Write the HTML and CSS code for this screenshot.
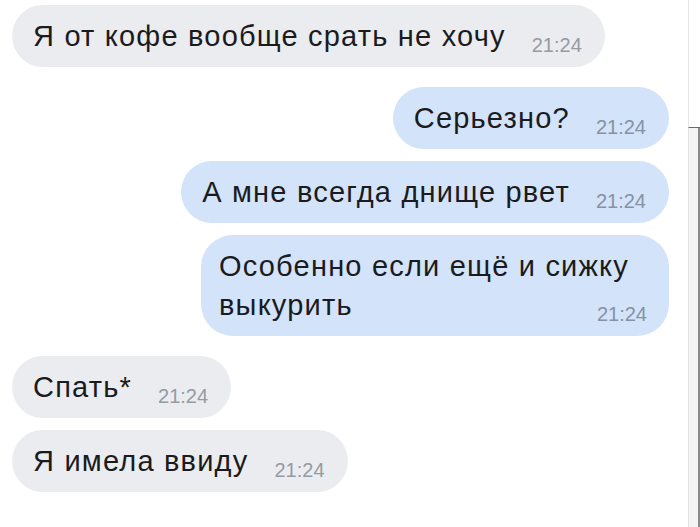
FILE: index.html
```html
<!DOCTYPE html>
<html lang="ru">
<head>
    <meta charset="UTF-8">
    <title>Переписка</title>
    <link rel="stylesheet" href="styles.css">
</head>
<body>
    <div class="screen">
        <div class="chat">
            <div class="group in">
                <div class="msg"><span class="text">Я от кофе вообще срать не хочу</span><span class="time">21:24</span></div>
            </div>

            <div class="group out">
                <div class="msg"><span class="text">Серьезно?</span><span class="time">21:24</span></div>
                <div class="msg"><span class="text">А мне всегда днище рвет</span><span class="time">21:24</span></div>
                <div class="msg long"><span class="text">Особенно если ещё и сижку<br>выкурить</span><span class="time">21:24</span></div>
            </div>

            <div class="group in">
                <div class="msg"><span class="text">Спать*</span><span class="time">21:24</span></div>
                <div class="msg"><span class="text">Я имела ввиду</span><span class="time">21:24</span></div>
            </div>
        </div>

        <div class="scroll">
            <div class="scroll-top"></div>
            <div class="scroll-track"></div>
        </div>
    </div>
</body>
</html>
```

FILE: styles.css
```css
html, body {
    margin: 0;
    height: 100%;
    background-color: white;
}
body {
    font-family: "Liberation Sans", Arial, sans-serif;
    color: #1b1b1d;
}
.screen {
    display: flex;
    height: 527px;
    overflow: hidden;
}
.chat {
    flex: 1;
    display: flex;
    flex-direction: column;
    gap: 20px;
    padding: 5px 19px 0 12px;
}
.group {
    display: flex;
    flex-direction: column;
    gap: 12px;
}
.group.in {
    align-items: flex-start;
}
.group.out {
    align-items: flex-end;
}
.msg {
    display: flow-root;
    padding: 12px 23px 11px 21px;
    border-radius: 32px;
    font-size: 29px;
    line-height: 39px;
    letter-spacing: 1.2px;
    white-space: nowrap;
}
.msg.long {
    padding-left: 18px;
    padding-right: 40px;
}
.msg.long .time {
    margin-right: -18px;
}
.in .msg {
    background-color: #ebecef;
}
.out .msg {
    background-color: #d2e3fa;
}
.time {
    float: right;
    margin: 18px 0 0 26px;
    font-size: 20px;
    line-height: 20px;
    letter-spacing: 0;
    color: #949ba4;
}
.out .time {
    color: #8692a3;
}
.scroll {
    width: 12px;
    display: flex;
    flex-direction: column;
}
.scroll-top {
    height: 127px;
    border-left: 1px solid #e6e6e6;
    border-bottom: 1px solid #6b6b6b;
}
.scroll-track {
    flex: 1;
    background-color: #f4f4f4;
    border-left: 1px solid #e4e4e4;
    border-right: 2px solid #8a8a8a;
}
```
